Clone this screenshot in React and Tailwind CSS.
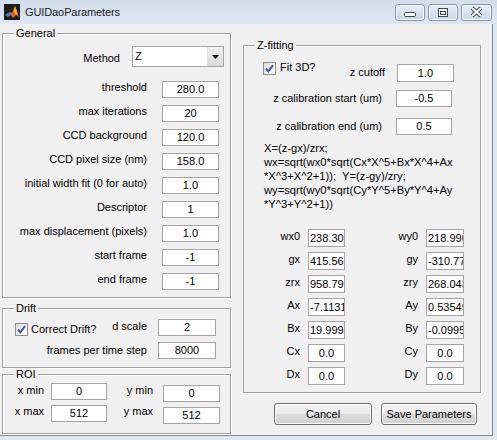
import React from "react";

const Field = ({ v, className = "", w = "w-[57px]", h = "h-[17px]", left = false }) => (
  <div
    className={`${w} ${h} ${className} shrink-0 border border-[#a5a5a5] bg-white flex items-center overflow-hidden whitespace-nowrap leading-[13px] ${
      left ? "justify-start pl-[1px]" : "justify-center"
    }`}
  >
    {v}
  </div>
);

const Check = ({ className = "" }) => (
  <svg width="13" height="13" viewBox="0 0 13 13" className={`shrink-0 ${className}`}>
    <defs>
      <linearGradient id="cb" x1="0" y1="0" x2="1" y2="1">
        <stop offset="0" stopColor="#dcdcdc" />
        <stop offset="1" stopColor="#ffffff" />
      </linearGradient>
    </defs>
    <rect x="0.5" y="0.5" width="12" height="12" fill="url(#cb)" stroke="#8e8f8f" />
    <path d="M3 6.5 L5.3 9.3 L10 3.2" fill="none" stroke="#3f56a0" strokeWidth="2" />
  </svg>
);

const Panel = ({ title, className = "", children }) => (
  <div
    className={`relative border border-[#a0a0a0] shadow-[1px_1px_0_#ffffff,inset_1px_1px_0_#ffffff] ${className}`}
  >
    <span className="absolute left-[11px] -top-[7px] bg-[#f0f0f0] px-[2px] leading-[13px] whitespace-nowrap">
      {title}
    </span>
    {children}
  </div>
);

const Row = ({ label, value }) => (
  <div className="flex items-start h-[17px]">
    <div className="w-[144px] text-right leading-[13px] whitespace-nowrap">{label}</div>
    <Field v={value} className="ml-[15px]" />
  </div>
);

const WinBtn = ({ w, children }) => (
  <div
    className={`${w} h-[17px] rounded-[3px] border border-[#8797ad] bg-gradient-to-b from-[#e6edf6] to-[#ccd8e8] shadow-[inset_0_0_0_1px_#f3f7fc]`}
  >
    {children}
  </div>
);

const Button = ({ w, children, className = "" }) => (
  <div
    className={`${w} ${className} h-[22px] rounded-[3px] border border-[#707070] bg-[linear-gradient(#f2f2f2_0%,#ebebeb_50%,#dddddd_51%,#cfcfcf_100%)] shadow-[inset_0_0_0_1px_#fcfcfc] flex items-center justify-center leading-[13px]`}
  >
    {children}
  </div>
);

const general = [
  ["threshold", "280.0"],
  ["max iterations", "20"],
  ["CCD background", "120.0"],
  ["CCD pixel size (nm)", "158.0"],
  ["initial width fit (0 for auto)", "1.0"],
  ["Descriptor", "1"],
  ["max displacement (pixels)", "1.0"],
  ["start frame", "-1"],
  ["end frame", "-1"],
];

const params = [
  ["wx0", "238.3071", "wy0", "218.9963"],
  ["gx", "415.5642", "gy", "-310.7734"],
  ["zrx", "958.7923", "zry", "268.0432"],
  ["Ax", "-7.11314", "Ay", "0.53549"],
  ["Bx", "19.99986", "By", "-0.09955"],
  ["Cx", "0.0", "Cy", "0.0"],
  ["Dx", "0.0", "Dy", "0.0"],
];

const formula = [
  "X=(z-gx)/zrx;",
  "wx=sqrt(wx0*sqrt(Cx*X^5+Bx*X^4+Ax",
  "*X^3+X^2+1));  Y=(z-gy)/zry;",
  "wy=sqrt(wy0*sqrt(Cy*Y^5+By*Y^4+Ay",
  "*Y^3+Y^2+1))",
];

export default function App() {
  return (
    <div className="w-[497px] h-[440px] bg-[#dfe7f1] font-['Liberation_Sans',Arial,sans-serif] text-[11px] text-black overflow-hidden">
      {/* Title bar */}
      <div className="h-[24px] flex items-start bg-gradient-to-b from-[#d3deec] to-[#dde6f2]">
        <svg width="16" height="16" viewBox="0 0 16 16" className="ml-[4px] mt-[4px] shrink-0">
          <rect width="16" height="16" fill="#1c1c1c" />
          <path d="M1 11 L6 8 L8 9 L11 2 L15 13 L12 11 L9 14 L7 11 Z" fill="#e2661d" />
          <path d="M11 2 L13.5 9 L12 11 L10 7 Z" fill="#f6b21c" />
          <path d="M1 11 L6 8 L7.5 11 L4 13 Z" fill="#3d7ac4" />
        </svg>
        <span className="ml-[5px] mt-[6px] leading-[13px] text-[11px] tracking-[-0.1px] text-[#1b1b1b]">
          GUIDaoParameters
        </span>
        <div className="ml-auto mr-[5px] mt-[4px] flex gap-[3px]">
          <WinBtn w="w-[30px]">
            <svg width="28" height="15" viewBox="0 0 28 15">
              <rect x="8.5" y="7.5" width="11" height="4" rx="1" fill="#ffffff" stroke="#3b4656" />
            </svg>
          </WinBtn>
          <WinBtn w="w-[30px]">
            <svg width="28" height="15" viewBox="0 0 28 15">
              <rect x="9.5" y="3.5" width="9" height="8" fill="#ffffff" stroke="#3b4656" />
              <rect x="11.5" y="6.5" width="5" height="3" fill="none" stroke="#3b4656" />
            </svg>
          </WinBtn>
          <WinBtn w="w-[31px]">
            <svg width="29" height="15" viewBox="0 0 29 15">
              <path d="M10 3 L19 11 M19 3 L10 11" stroke="#3b4656" strokeWidth="4" />
              <path d="M10 3 L19 11 M19 3 L10 11" stroke="#ffffff" strokeWidth="2" />
            </svg>
          </WinBtn>
        </div>
      </div>

      {/* Client area */}
      <div className="w-[493px] h-[412px] bg-[#f0f0f0] border-r border-b border-[#7a8798] flex items-start">
        {/* Left column */}
        <div className="ml-[2px] w-[229px] flex flex-col">
          <Panel title="General" className="mt-[9px] h-[265px]">
            <div className="flex flex-col pt-[12px]">
              <div className="flex items-start h-[21px]">
                <div className="w-[117px] text-right mt-[6px] leading-[13px]">Method</div>
                <div className="ml-[12px] w-[92px] h-[21px] border border-[#a5a5a5] bg-white flex items-stretch">
                  <div className="flex-1 flex items-center pl-[2px] leading-[13px]">Z</div>
                  <div className="w-[16px] bg-gradient-to-b from-[#f0f0f0] to-[#d9d9d9] border-l border-[#e0e0e0] flex items-center justify-center">
                    <svg width="7" height="4" viewBox="0 0 7 4">
                      <path d="M0 0 H7 L3.5 4 Z" fill="#000000" />
                    </svg>
                  </div>
                </div>
              </div>
              <div className="mt-[14px] flex flex-col gap-[7px]">
                {general.map(([l, v]) => (
                  <Row key={l} label={l} value={v} />
                ))}
              </div>
            </div>
          </Panel>

          <Panel title="Drift" className="mt-[10px] h-[60px]">
            <div className="flex flex-col pt-[10px]">
              <div className="flex items-start h-[17px]">
                <div className="w-[144px] flex items-start">
                  <Check className="ml-[12px] mt-[4px]" />
                  <span className="ml-[3px] mt-[4px] leading-[13px] whitespace-nowrap">Correct Drift?</span>
                  <span className="ml-auto mt-[1px] leading-[13px] whitespace-nowrap">d scale</span>
                </div>
                <Field v="2" w="w-[58px]" className="ml-[11px]" />
              </div>
              <div className="flex items-start h-[17px] mt-[6px]">
                <div className="w-[144px] text-right mt-[2px] leading-[13px] whitespace-nowrap">
                  frames per time step
                </div>
                <Field v="8000" w="w-[58px]" className="ml-[11px]" />
              </div>
            </div>
          </Panel>

          <Panel title="ROI" className="mt-[6px] h-[60px]">
            <div className="flex flex-col pt-[8px]">
              <div className="flex items-start h-[19px]">
                <div className="w-[41px] text-right mt-[1px] leading-[13px]">x min</div>
                <Field v="0" w="w-[56px]" className="ml-[7px]" />
                <div className="w-[46px] text-right mt-[1px] leading-[13px]">y min</div>
                <Field v="0" className="ml-[10px] mt-[2px]" />
              </div>
              <div className="flex items-start h-[19px] mt-[3px]">
                <div className="w-[41px] text-right leading-[13px]">x max</div>
                <Field v="512" w="w-[56px]" className="ml-[7px]" />
                <div className="w-[46px] text-right leading-[13px]">y max</div>
                <Field v="512" className="ml-[10px] mt-[2px]" />
              </div>
            </div>
          </Panel>
        </div>

        {/* Right column */}
        <div className="ml-[12px] w-[238px] flex flex-col">
          <Panel title="Z-fitting" className="mt-[21px] h-[348px]">
            <div className="flex flex-col pt-[15px]">
              <div className="flex items-start h-[21px]">
                <div className="w-[141px] flex items-start">
                  <Check className="ml-[19px] mt-[1px]" />
                  <span className="ml-[4px] leading-[13px] whitespace-nowrap">Fit 3D?</span>
                  <span className="ml-auto mt-[5px] leading-[13px] whitespace-nowrap">z cutoff</span>
                </div>
                <Field v="1.0" h="h-[18px]" className="ml-[12px] mt-[3px]" />
              </div>
              <div className="flex items-start h-[17px] mt-[8px]">
                <div className="w-[138px] text-right mt-[2px] leading-[13px] whitespace-nowrap">
                  z calibration start (um)
                </div>
                <Field v="-0.5" w="w-[56px]" className="ml-[14px]" />
              </div>
              <div className="flex items-start h-[17px] mt-[11px]">
                <div className="w-[138px] text-right mt-[2px] leading-[13px] whitespace-nowrap">
                  z calibration end (um)
                </div>
                <Field v="0.5" w="w-[56px]" className="ml-[14px]" />
              </div>
              <div className="mt-[6px] ml-[20px] leading-[14px] text-[11.2px] whitespace-pre">
                {formula.map((l) => (
                  <div key={l}>{l}</div>
                ))}
              </div>
              <div className="mt-[18px] flex flex-col gap-[5px]">
                {params.map(([a, av, b, bv]) => (
                  <div key={a} className="flex items-start h-[18px]">
                    <div className="w-[56px] text-right mt-[1px] leading-[13px]">{a}</div>
                    <Field v={av} w="w-[37px]" h="h-[18px]" left={av.length > 4} className="ml-[8px]" />
                    <div className="w-[73px] text-right mt-[1px] leading-[13px]">{b}</div>
                    <Field v={bv} w="w-[38px]" h="h-[18px]" left={bv.length > 4} className="ml-[8px]" />
                  </div>
                ))}
              </div>
            </div>
          </Panel>
          <div className="mt-[10px] flex">
            <Button w="w-[98px]" className="ml-[31px]">Cancel</Button>
            <Button w="w-[96px]" className="ml-[9px]">Save Parameters</Button>
          </div>
        </div>
      </div>
    </div>
  );
}
